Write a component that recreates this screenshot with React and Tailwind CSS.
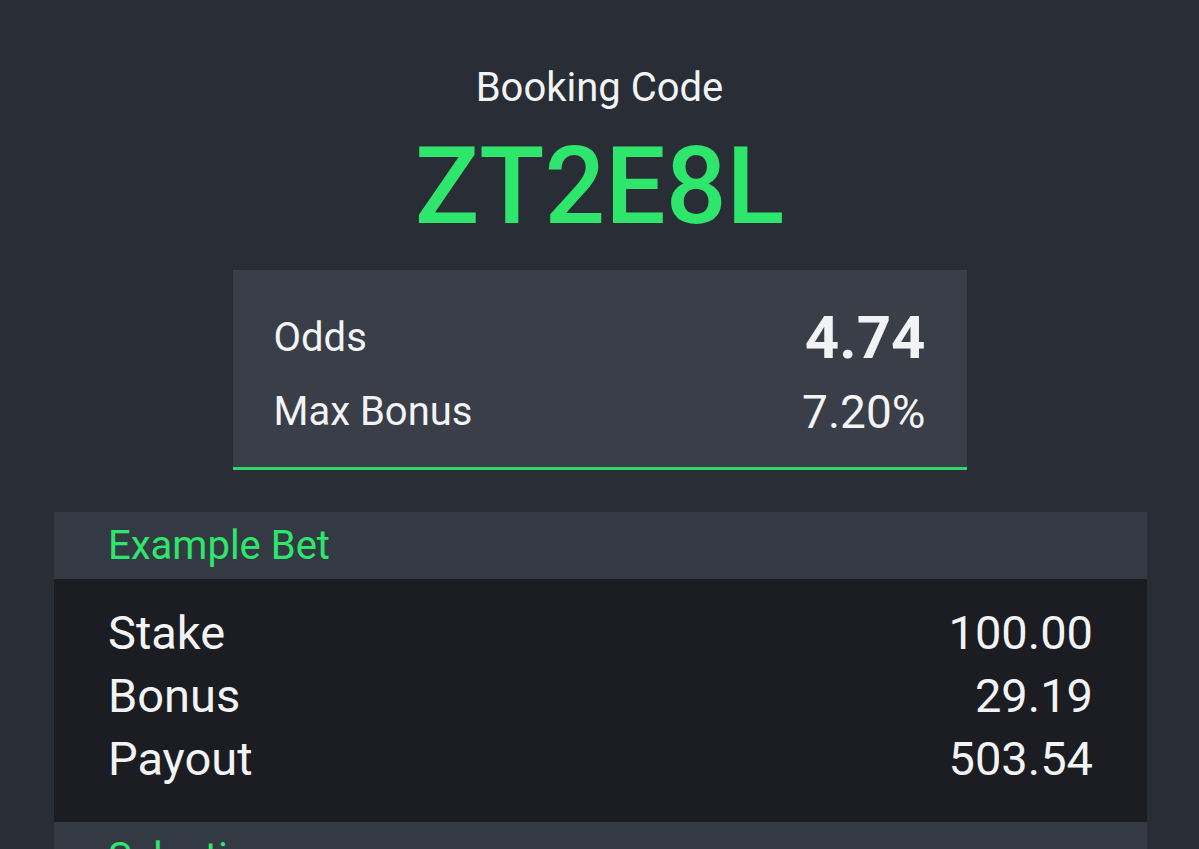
import React from "react";

const betRows = [
  { label: "Stake", value: "100.00" },
  { label: "Bonus", value: "29.19" },
  { label: "Payout", value: "503.54" },
];

const App = () => {
  return (
    <div
      className="w-full h-[849px] overflow-hidden bg-[#282d36] text-[#f2f3f4]"
      style={{ fontFamily: "Roboto, 'Noto Sans', sans-serif" }}
    >
      {/* BOOKING CODE */}
      <div className="flex flex-col items-center pt-[66px]">
        <p className="text-[40px] leading-[44px]">Booking Code</p>
        <h1 className="mt-[21px] text-[107px] leading-[112px] font-medium text-[#2ee66b]">
          ZT2E8L
        </h1>

        {/* ODDS BOX */}
        <div className="mt-[27px] w-[734px] bg-[#393e48] border-b-[3px] border-[#2fd866] px-[41px] pt-[36px] pb-[23px]">
          <div className="flex justify-between items-center h-[64px]">
            <span className="text-[40px]">Odds</span>
            <span className="text-[60px] font-bold">4.74</span>
          </div>
          <div className="flex justify-between items-center h-[64px] mt-[10px]">
            <span className="text-[40px]">Max Bonus</span>
            <span className="text-[46px]">7.20%</span>
          </div>
        </div>
      </div>

      {/* EXAMPLE BET */}
      <div className="mt-[42px] ml-[54px] mr-[52px]">
        <div className="h-[67px] flex items-center px-[54px] bg-[#343a43]">
          <h2 className="text-[40px] text-[#2ee66b]">Example Bet</h2>
        </div>
        <div className="bg-[#1b1d22] px-[54px] pt-[23px] pb-[31px]">
          {betRows.map((row) => (
            <div
              key={row.label}
              className="flex justify-between items-center h-[63px] text-[47px]"
            >
              <span>{row.label}</span>
              <span>{row.value}</span>
            </div>
          ))}
        </div>

        {/* SELECTIONS */}
        <div className="h-[67px] flex items-start pt-[6px] px-[54px] bg-[#343a43]">
          <h2 className="text-[40px] leading-[60px] text-[#2ee66b]">Selections</h2>
        </div>
      </div>
    </div>
  );
};

export default App;
